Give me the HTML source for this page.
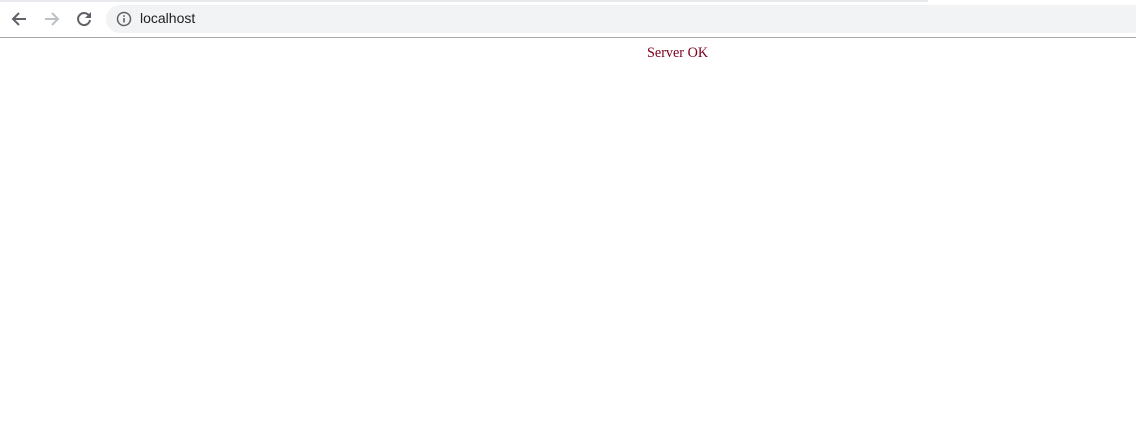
<!DOCTYPE html>
<html><head><style>
body{margin:0;width:1136px;height:444px;background:#fff;position:relative;overflow:hidden;font-family:"Liberation Sans",sans-serif}
.top{position:absolute;left:0;top:0;width:928px;height:2px;background:#e8eaed}
.bar{position:absolute;left:0;top:37px;width:1136px;height:1px;background:#a8a8a8}
.omni{position:absolute;left:106px;top:5px;width:1040px;height:28px;border-radius:14px;background:#f1f3f4}
.url{position:absolute;left:140px;top:10px;font-size:14px;color:#202124}
.msg{position:absolute;left:647px;top:45px;font-family:"Liberation Serif",serif;font-size:14.2px;color:#800020}
svg{position:absolute}
</style></head><body>
<div class="top"></div>
<div class="omni"></div>
<svg style="left:10px;top:10px" width="18" height="18" viewBox="0 0 18 18"><path d="M16 9H3M9 3L3 9l6 6" stroke="#5f6368" stroke-width="2" fill="none"/></svg>
<svg style="left:43px;top:10px" width="18" height="18" viewBox="0 0 18 18"><path d="M2 9h13M9 3l6 6-6 6" stroke="#bdc1c6" stroke-width="2" fill="none"/></svg>
<svg style="left:75px;top:10px" width="18" height="18" viewBox="0 0 18 18"><path d="M14.5 6.5A6 6 0 1 0 15 10" stroke="#5f6368" stroke-width="2" fill="none"/><path d="M16 2v6h-6z" fill="#5f6368"/></svg>
<svg style="left:116px;top:11px" width="16" height="16" viewBox="0 0 16 16"><circle cx="8" cy="8" r="6.5" stroke="#5f6368" stroke-width="1.5" fill="none"/><rect x="7.2" y="7" width="1.6" height="4.5" fill="#5f6368"/><rect x="7.2" y="4.2" width="1.6" height="1.6" fill="#5f6368"/></svg>
<div class="url">localhost</div>
<div class="bar"></div>
<div class="msg">Server OK</div>
</body></html>
